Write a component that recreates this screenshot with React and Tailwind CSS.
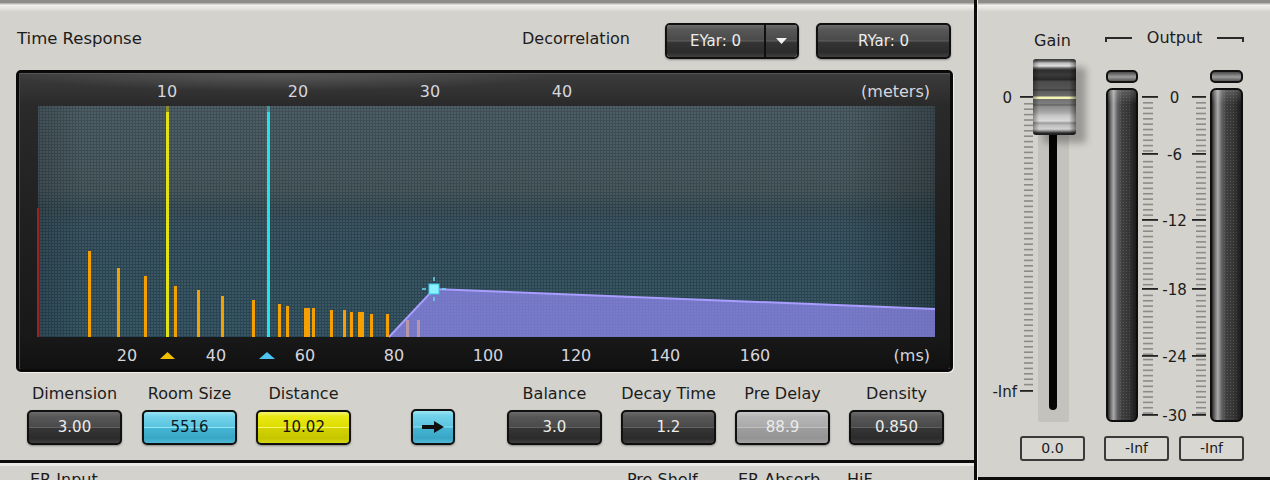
import React from 'react';

const FONT = "font-['DejaVu_Sans',Verdana,sans-serif]";

const TONES = {
  dark: 'bg-[linear-gradient(to_bottom,#6c6c6c_0%,#575757_15%,#4a4a4a_47%,#626262_50%,#353535_53%,#2b2b2b_85%,#404040_100%)] text-[#ececec]',
  cyan: 'bg-[linear-gradient(to_bottom,#9ae4f4_0%,#72d2ea_15%,#5cc5e0_47%,#92e6f5_50%,#45b5d4_53%,#3aa6c6_85%,#4fb8d6_100%)] text-[#0b1a22]',
  yellow: 'bg-[linear-gradient(to_bottom,#f4f46a_0%,#e8e814_15%,#dede00_47%,#f6f670_50%,#d2d200_53%,#c6c600_85%,#d6d610_100%)] text-[#111111]',
  gray: 'bg-[linear-gradient(to_bottom,#cacaca_0%,#b6b6b6_15%,#aaaaaa_47%,#c0c0c0_50%,#9d9d9d_53%,#949494_85%,#a4a4a4_100%)] text-[#eaeaea]',
};

// early reflections (page x centre, top y)
const BARS = [
  [89, 251], [118, 268], [145, 276], [175, 286], [198, 290], [222, 296], [253, 300],
  [279, 304], [287, 306], [305, 308], [308, 308], [313, 308], [331, 310], [344, 310],
  [351, 312], [359, 312], [362, 312], [371, 314], [387, 314], [407, 320], [418, 320],
];
const OX = 19;
const OY = 73;

const METERS_AXIS = [['10', 148], ['20', 279], ['30', 411], ['40', 543]];
const MS_AXIS = [['20', 108], ['40', 197], ['60', 286], ['80', 375], ['100', 469], ['120', 557], ['140', 646], ['160', 736]];

function TopStrip() {
  return (
    <>
      <div className="h-[3px] shrink-0 bg-[#8d8c89]" />
      <div className="h-[9px] shrink-0 bg-[linear-gradient(to_bottom,#a5a4a1,#f1f0ee_25%,#e4e3e0_60%,#d4d2cd)]" />
    </>
  );
}

function TimeGraph() {
  return (
    <svg width="931" height="296" viewBox="0 0 931 296" className="block">
      <defs>
        <linearGradient id="frameBg" x1="0" y1="0" x2="0" y2="1">
          <stop offset="0" stopColor="#3c3c3c" />
          <stop offset="0.11" stopColor="#2a2a2a" />
          <stop offset="0.5" stopColor="#202020" />
          <stop offset="0.9" stopColor="#181818" />
          <stop offset="1" stopColor="#111111" />
        </linearGradient>
        <radialGradient id="frameGlow" cx="0.28" cy="0" r="0.3">
          <stop offset="0" stopColor="#5e5e5e" stopOpacity="0.85" />
          <stop offset="1" stopColor="#5e5e5e" stopOpacity="0" />
        </radialGradient>
        <linearGradient id="plotBg" x1="0" y1="0" x2="0" y2="1">
          <stop offset="0" stopColor="#3f4f57" />
          <stop offset="0.36" stopColor="#39494f" />
          <stop offset="0.44" stopColor="#2d414a" />
          <stop offset="0.52" stopColor="#2a4450" />
          <stop offset="1" stopColor="#284654" />
        </linearGradient>
        <linearGradient id="plotVignette" x1="0" y1="0" x2="1" y2="0">
          <stop offset="0" stopColor="#000" stopOpacity="0.15" />
          <stop offset="0.05" stopColor="#000" stopOpacity="0" />
          <stop offset="0.9" stopColor="#000" stopOpacity="0" />
          <stop offset="1" stopColor="#000" stopOpacity="0.25" />
        </linearGradient>
        <pattern id="dots" width="3" height="3" patternUnits="userSpaceOnUse">
          <rect width="2" height="2" fill="#ffffff" fillOpacity="0.09" />
        </pattern>
      </defs>

      <rect width="931" height="296" fill="url(#frameBg)" />
      <rect width="931" height="60" fill="url(#frameGlow)" />
      <line x1="0" y1="0.5" x2="931" y2="0.5" stroke="#555" />
      <line x1="0.5" y1="0" x2="0.5" y2="296" stroke="#4a4a4a" />

      <rect x="19" y="33" width="897" height="231" fill="url(#plotBg)" />
      <rect x="19" y="33" width="897" height="231" fill="url(#dots)" />
      <rect x="19" y="33" width="897" height="231" fill="url(#plotVignette)" />

      <rect x="18" y="135" width="2" height="129" fill="#9a2222" />

      {BARS.map(([x, top], i) => (
        <rect key={i} x={x - OX - 1} y={top - OY} width="3" height={337 - top} fill="#f5a000" />
      ))}

      <rect x="147" y="33" width="3" height="231" fill="#e2e214" />
      <rect x="147" y="33" width="3" height="6" fill="#8a8a2a" />
      <rect x="248" y="33" width="3" height="231" fill="#22e2ea" />
      <rect x="248" y="33" width="3" height="6" fill="#3a9a9e" />

      <polygon points="370,264 415,216 916,236 916,264" fill="#9a8eff" fillOpacity="0.66" />
      <polyline points="370,264 415,216 916,236" fill="none" stroke="#a99dff" strokeWidth="2" />

      <rect x="410" y="211" width="10" height="10" fill="#8cf0ff" stroke="#3cc8e8" />
      <g stroke="#6ad8f0" strokeWidth="1.5">
        <line x1="415" y1="204" x2="415" y2="208" />
        <line x1="415" y1="224" x2="415" y2="228" />
        <line x1="403" y1="216" x2="407" y2="216" />
        <line x1="423" y1="216" x2="427" y2="216" />
      </g>

      <g fontFamily="DejaVu Sans, Verdana, sans-serif" fontSize="16" fill="#d6d6de">
        {METERS_AXIS.map(([t, x]) => (
          <text key={t} x={x} y="24" textAnchor="middle">{t}</text>
        ))}
        <text x="911" y="24" textAnchor="end">(meters)</text>
        {MS_AXIS.map(([t, x]) => (
          <text key={t} x={x} y="288" textAnchor="middle">{t}</text>
        ))}
        <text x="911" y="288" textAnchor="end">(ms)</text>
      </g>

      <polygon points="141,286 156,286 148.5,279" fill="#f0c000" />
      <polygon points="240,286 256,286 248,279" fill="#4cc6f0" />
    </svg>
  );
}

function ValueBox({ tone = 'dark', className = '', children }) {
  return (
    <div
      className={`flex items-center justify-center rounded-[5px] border-2 border-[#101010] text-[15px] shadow-[0_1px_2px_rgba(0,0,0,0.35)] ${TONES[tone]} ${className}`}
    >
      {children}
    </div>
  );
}

function Control({ label, value, tone, className = '' }) {
  return (
    <div className={`flex w-[95px] flex-col items-center ${className}`}>
      <div className="h-[20px] whitespace-nowrap text-[16px] leading-[20px]">{label}</div>
      <ValueBox tone={tone} className="mt-[6px] h-[35px] w-[95px]">{value}</ValueBox>
    </div>
  );
}

function GainScale() {
  const ticks = [];
  for (let y = 45; y < 330; y += 5.4) ticks.push(y);
  return (
    <svg width="55" height="378" className="block shrink-0">
      {ticks.map((y, i) => (
        <rect key={i} x="46" y={y} width="9" height="1.6" fill="#8c8b88" />
      ))}
      <rect x="42" y="38" width="14" height="1.8" fill="#222" />
      <rect x="42" y="332" width="14" height="1.8" fill="#222" />
      <g fontFamily="DejaVu Sans, Verdana, sans-serif" fontSize="15" fill="#1c1c1c">
        <text x="34" y="45" textAnchor="end">0</text>
        <text x="39" y="339" textAnchor="end">-Inf</text>
      </g>
    </svg>
  );
}

const DB_MARKS = [['0', 39], ['-6', 96], ['-12', 162], ['-18', 231], ['-24', 298], ['-30', 357]];

function MeterScale() {
  const ticks = [];
  for (let y = 44; y < 355; y += 5.35) {
    if (DB_MARKS.some(([, m]) => Math.abs(m - y) < 2.5)) continue;
    ticks.push(y);
  }
  return (
    <svg width="72" height="378" className="block shrink-0">
      {ticks.map((y, i) => (
        <g key={i} fill="#8c8b88">
          <rect x="5" y={y} width="10" height="1.6" />
          <rect x="58" y={y} width="10" height="1.6" />
        </g>
      ))}
      {DB_MARKS.map(([t, y]) => (
        <g key={t}>
          <rect x="4" y={y - 1} width="16" height="1.8" fill="#222" />
          <rect x="54" y={y - 1} width="14" height="1.8" fill="#222" />
          <text x="36.5" y={y + 5.5} textAnchor="middle" fontFamily="DejaVu Sans, Verdana, sans-serif" fontSize="15" fill="#1c1c1c">{t}</text>
        </g>
      ))}
    </svg>
  );
}

function Meter({ className = '' }) {
  return (
    <div className={`flex shrink-0 flex-col ${className}`}>
      <div className="mt-[12px] h-[13px] rounded-[5px] border-2 border-[#111] bg-[linear-gradient(to_bottom,#4a4a4a,#8e8e8e_45%,#9c9c9c_55%,#555555)]" />
      <div className="relative mt-[5px] h-[334px] overflow-hidden rounded-[6px] border-2 border-[#0e0e0e] bg-[linear-gradient(to_right,#262626_0%,#707070_10%,#aaaaaa_20%,#606060_34%,#3e3e3e_50%,#353535_75%,#1c1c1c_100%)]">
        <div className="absolute inset-y-0 left-[38%] right-[14%] bg-[radial-gradient(circle,rgba(255,255,255,0.14)_0.8px,transparent_1px)] bg-[length:3px_3px]" />
        <div className="absolute inset-x-0 top-0 h-[14px] bg-[linear-gradient(to_bottom,rgba(255,255,255,0.18),transparent)]" />
      </div>
    </div>
  );
}

function SmallBox({ children, className = '' }) {
  return (
    <div className={`flex h-[25px] w-[65px] items-center justify-center rounded-[3px] border-2 border-[#3a3a3a] bg-[#d9d7d2] text-[14px] text-[#1a1a1a] ${className}`}>
      {children}
    </div>
  );
}

export default function App() {
  return (
    <div className={`flex h-[480px] w-[1270px] overflow-hidden bg-[#d4d2cd] text-[#1c1c1c] ${FONT}`}>
      {/* left: time response */}
      <div className="flex h-[480px] w-[974px] shrink-0 flex-col">
        <TopStrip />
        <div className="flex h-[58px] shrink-0 items-center pr-[23px]">
          <span className="mb-[4px] ml-[17px] text-[16.5px]">Time Response</span>
          <span className="mb-[4px] ml-auto text-[16px]">Decorrelation</span>
          <div className="ml-[35px] flex h-[36px] w-[134px] overflow-hidden rounded-[5px] border-2 border-[#101010] shadow-[0_1px_2px_rgba(0,0,0,0.35)]">
            <div className={`flex flex-1 items-center justify-center text-[15px] ${TONES.dark}`}>EYar: 0</div>
            <div className="w-[2px] bg-[#101010]" />
            <div className={`flex w-[31px] items-center justify-center ${TONES.dark}`}>
              <svg width="11" height="6"><polygon points="0,0 11,0 5.5,6" fill="#f2f2f2" /></svg>
            </div>
          </div>
          <ValueBox className="ml-[17px] h-[36px] w-[135px]">RYar: 0</ValueBox>
        </div>

        <div className="ml-[16px] h-[302px] w-[937px] shrink-0 overflow-hidden rounded-[5px] border-[3px] border-[#0a0a0a] shadow-[1px_1px_0_#f0efec]">
          <TimeGraph />
        </div>

        <div className="flex h-[88px] shrink-0 items-start pl-[27px] pt-[12px]">
          <Control label="Dimension" value="3.00" />
          <Control label="Room Size" value="5516" tone="cyan" className="ml-[20px]" />
          <Control label="Distance" value="10.02" tone="yellow" className="ml-[19px]" />
          <ValueBox tone="cyan" className="ml-[60px] mt-[25px] h-[36px] w-[44px]">
            <svg width="22" height="12" viewBox="0 0 22 12">
              <polygon points="0,4 12,4 12,0 22,6 12,12 12,8 0,8" fill="#101010" />
            </svg>
          </ValueBox>
          <Control label="Balance" value="3.0" className="ml-[52px]" />
          <Control label="Decay Time" value="1.2" className="ml-[19px]" />
          <Control label="Pre Delay" value="88.9" tone="gray" className="ml-[19px]" />
          <Control label="Density" value="0.850" className="ml-[19px]" />
        </div>

        <div className="h-[3px] shrink-0 bg-[#0c0c0c]" />
        <div className="min-h-0 flex-1 overflow-hidden border-t-[3px] border-[#ebeae7] bg-[#d4d2cd]">
          <div className="flex pt-[4px] text-[16px] leading-[20px]">
            <span className="w-[627px] pl-[30px]">ER Input</span>
            <span className="w-[111px]">Pre Shelf</span>
            <span className="w-[109px]">ER Absorb</span>
            <span>HiF</span>
          </div>
        </div>
      </div>

      <div className="w-[3px] shrink-0 bg-[#0c0c0c]" />

      {/* right: gain / output */}
      <div className="flex h-[480px] w-[293px] shrink-0 flex-col border-l border-[#eceae6]">
        <TopStrip />
        <div className="flex h-[46px] shrink-0 items-center">
          <span className="ml-[56px] mt-[12px] text-[16px]">Gain</span>
          <div className="ml-[34px] mt-[5px] flex items-start">
            <div className="mt-[9px] h-[5px] w-[27px] border-l-2 border-t-2 border-[#2a2a2a]" />
            <span className="mx-[15px] text-[16px] leading-[20px]">Output</span>
            <div className="mt-[9px] h-[5px] w-[27px] border-r-2 border-t-2 border-[#2a2a2a]" />
          </div>
        </div>

        <div className="flex h-[378px] shrink-0">
          <GainScale />
          <div className="relative w-[55px] shrink-0">
            <div className="ml-[5px] mt-[2px] h-[362px] w-[31px] rounded-b-[2px] bg-[#c4c2bd]">
              <div className="ml-[11px] h-[350px] w-[8px] rounded-b-full bg-[#050505]" />
            </div>
            <div className="absolute left-0 top-[1px] h-[76px] w-[43px] rounded-[3px] bg-[linear-gradient(to_right,rgba(0,0,0,0.35),transparent_14%,transparent_84%,rgba(0,0,0,0.45)),linear-gradient(to_bottom,#3a3a3a_0px,#5a5a5a_2px,#bcbcbc_4px,#e2e2e2_7px,#6a6a6a_9px,#2e2e2e_11px,#3a3a3a_16px,#262626_21px,#4a4a4a_22px,#555555_30px,#333333_31px,#5c5c5c_32px,#6a6a6a_37px,#f4f4b4_38px,#f4f4b4_40px,#727272_40px,#7e7e7e_45px,#5a5a5a_46px,#8a8a8a_47px,#a6a6a6_53px,#c8c8c8_57px,#dadada_62px,#9a9a9a_64px,#bdbdbd_66px,#d2d2d2_70px,#8a8a8a_72px,#2a2a2a_74px,#1a1a1a_76px)] shadow-[10px_8px_7px_rgba(0,0,0,0.28)]" />
          </div>
          <Meter className="ml-[18px] w-[32px]" />
          <MeterScale />
          <Meter className="w-[33px]" />
        </div>

        <div className="flex h-[25px] shrink-0 pl-[42px]">
          <SmallBox>0.0</SmallBox>
          <SmallBox className="ml-[19px]">-Inf</SmallBox>
          <SmallBox className="ml-[10px]">-Inf</SmallBox>
        </div>
        <div className="h-[16px] shrink-0" />
        <div className="h-[3px] shrink-0 bg-[#0c0c0c]" />
      </div>
    </div>
  );
}
